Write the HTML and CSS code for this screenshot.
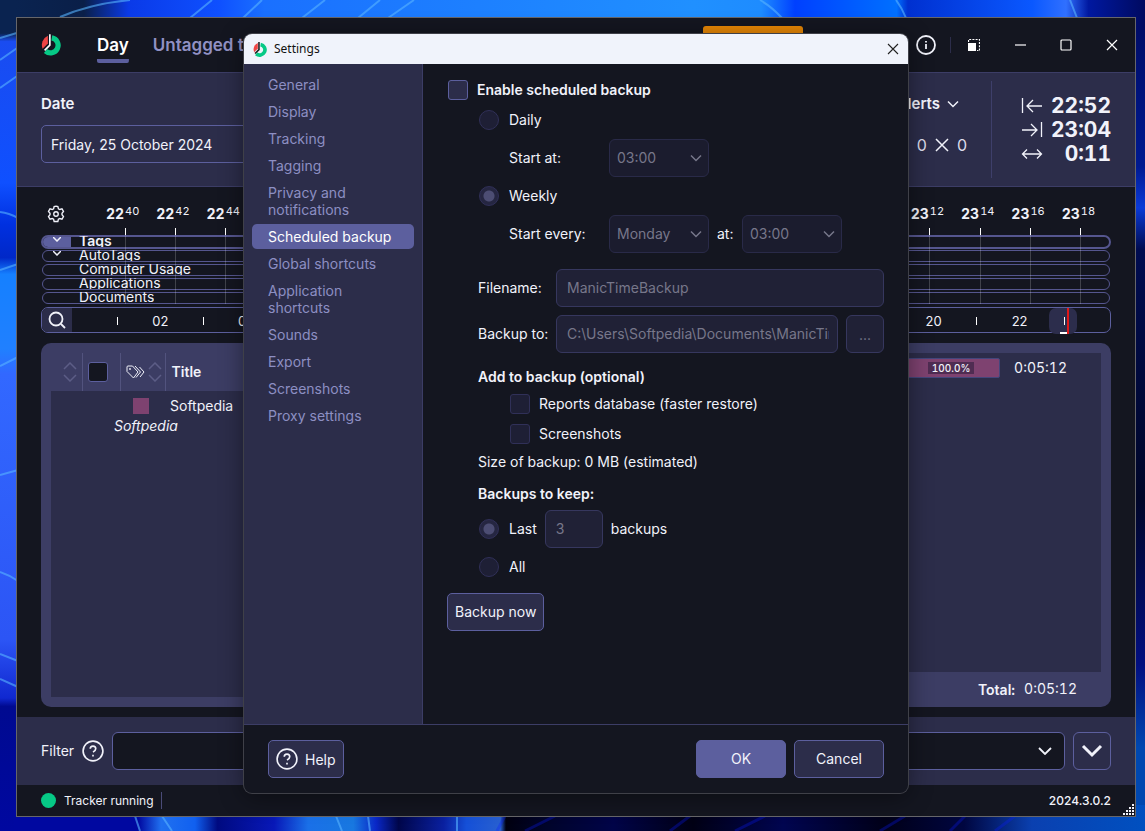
FILE: index.html
```html
<!DOCTYPE html>
<html lang="en">
<head>
<meta charset="utf-8">
<title>ManicTime</title>
<link rel="stylesheet" href="styles.css">
</head>
<body>
<div class="desktop">
<svg class="wallpaper" viewBox="0 0 1145 831" preserveAspectRatio="none" aria-hidden="true">
  <defs>
    <linearGradient id="wl" x1="0" y1="0" x2="0" y2="1">
      <stop offset="0" stop-color="#0a2350"/><stop offset=".04" stop-color="#0a2350"/><stop offset=".05" stop-color="#1a4cf0"/>
      <stop offset=".22" stop-color="#0f50ff"/><stop offset=".27" stop-color="#0030e0"/><stop offset=".31" stop-color="#0028c8"/>
      <stop offset=".33" stop-color="#1580ff"/><stop offset=".42" stop-color="#2080ff"/><stop offset=".45" stop-color="#3268ff"/>
      <stop offset=".77" stop-color="#2c55f5"/><stop offset=".84" stop-color="#1028d0"/><stop offset=".85" stop-color="#000a90"/>
      <stop offset="1" stop-color="#0008a0"/>
    </linearGradient>
    <linearGradient id="wt" x1="0" y1="0" x2="1" y2="0">
      <stop offset="0" stop-color="#0a2350"/><stop offset=".06" stop-color="#0a1f48"/><stop offset=".1" stop-color="#0a3ae8"/>
      <stop offset=".18" stop-color="#0f50ff"/><stop offset=".22" stop-color="#1a70ff"/><stop offset=".6" stop-color="#2090ff"/>
      <stop offset=".66" stop-color="#1e8cff"/><stop offset=".69" stop-color="#0040ff"/><stop offset=".78" stop-color="#0070ff"/>
      <stop offset=".79" stop-color="#0030d0"/><stop offset=".9" stop-color="#0a58ff"/><stop offset=".93" stop-color="#3070ff"/>
      <stop offset=".95" stop-color="#0018a0"/><stop offset="1" stop-color="#000a60"/>
    </linearGradient>
    <linearGradient id="wr" x1="0" y1="0" x2="0" y2="1">
      <stop offset="0" stop-color="#000a60"/><stop offset=".2" stop-color="#001a90"/><stop offset=".25" stop-color="#0a3ad8"/>
      <stop offset=".3" stop-color="#000c50"/><stop offset=".6" stop-color="#000628"/><stop offset=".8" stop-color="#020f80"/>
      <stop offset=".9" stop-color="#0048b0"/><stop offset="1" stop-color="#0048b0"/>
    </linearGradient>
    <linearGradient id="wb" x1="0" y1="0" x2="1" y2="0">
      <stop offset="0" stop-color="#0008a0"/><stop offset=".11" stop-color="#0008a0"/><stop offset=".13" stop-color="#2070f0"/>
      <stop offset=".16" stop-color="#1060f0"/><stop offset=".18" stop-color="#000a80"/><stop offset=".23" stop-color="#0818b8"/>
      <stop offset=".26" stop-color="#1a70e8"/><stop offset=".3" stop-color="#1878e0"/><stop offset=".32" stop-color="#0a28c8"/>
      <stop offset=".34" stop-color="#00064a"/><stop offset=".38" stop-color="#0a20a0"/><stop offset=".4" stop-color="#1550d8"/>
      <stop offset=".43" stop-color="#2860d0"/><stop offset=".435" stop-color="#000010"/><stop offset=".47" stop-color="#00042a"/>
      <stop offset=".53" stop-color="#000448"/><stop offset=".6" stop-color="#000014"/><stop offset=".68" stop-color="#000550"/>
      <stop offset=".77" stop-color="#000018"/><stop offset=".84" stop-color="#000640"/><stop offset=".9" stop-color="#0a40b0"/>
      <stop offset="1" stop-color="#0050c0"/>
    </linearGradient>
  </defs>
  <rect width="1145" height="831" fill="#000a60"/>
  <rect width="40" height="831" fill="url(#wl)"/>
  <rect x="1120" width="25" height="831" fill="url(#wr)"/>
  <rect x="16" width="1129" height="30" fill="url(#wt)"/>
  <rect x="14" y="805" width="1131" height="26" fill="url(#wb)"/>
  <g fill="none" stroke="#58b4ff" stroke-width="2" opacity=".6">
    <path d="M0 38L20 32M0 60L20 46M0 88L20 74M0 212Q9 213 18 218M0 270L18 264M0 366L18 357M0 475L18 470M0 572Q9 575 18 581M0 654L18 661M0 679L18 687"/>
    <path d="M60 17Q90 4 130 0M190 18L212 0M243 18L262 0M302 18L325 0M358 18L380 0M388 18L414 0M760 0Q772 7 782 18M896 0Q902 8 906 18M1070 0L1077 18"/>
    <path d="M135 816L140 831M162 816L172 831M336 816L342 831M368 816L370 831M457 816V831"/>
  </g>
  <g stroke="#0a1cff" stroke-width="3" opacity=".3">
    <path d="M505 816L497 831M555 816L525 831M690 816L670 831M765 816L735 831M905 816L880 831M965 816L950 831M1015 816L995 831"/>
  </g>
</svg>

<main class="window">
  <header class="topbar">
    <svg class="logo" viewBox="0 0 61 65" aria-hidden="true"><path d="M33 11A23 23 0 1 1 14 51" fill="none" stroke="#06c986" stroke-width="16"/><path d="M21 4V28L5 44A31 31 0 0 1 21 4Z" fill="#ef4545"/><path d="M27 0V33L11 49" fill="none" stroke="#fff" stroke-width="5"/></svg>
    <nav class="tabs">
      <a class="tab tab-active" href="#day">Day</a>
      <a class="tab" href="#untagged">Untagged time</a>
    </nav>
    <button class="promo" type="button" aria-label="Upgrade"></button>
    <button class="info" type="button" aria-label="Info"><svg viewBox="0 0 20 20"><circle cx="10" cy="10" r="9" /><path d="M10 9V14M10 6V7.500"/></svg></button>
    <div class="caption">
      <button type="button" aria-label="Compact view"><svg viewBox="0 0 12 12"><path d="M0 4H8V12H0Z" fill="#fff" stroke="none"/><path d="M.5 3V.5H11.500V11.500H9" stroke-dasharray="2 1.200"/></svg></button>
      <button type="button" aria-label="Minimize"><svg viewBox="0 0 12 12"><path d="M1 6H12"/></svg></button>
      <button type="button" aria-label="Maximize"><svg viewBox="0 0 12 12"><rect x="1" y="1" width="10" height="10" rx="1"/></svg></button>
      <button type="button" aria-label="Close"><svg viewBox="0 0 12 12"><path d="M1 1L11 11M11 1L1 11"/></svg></button>
    </div>
  </header>

  <section class="dayband">
    <div class="datebox">
      <label for="date">Date</label>
      <input id="date" type="text" value="Friday, 25 October 2024">
    </div>
    <div class="alerts">
      <button type="button" class="alerts-head">Alerts <svg viewBox="0 0 12 8"><path d="M1 1.500L6 6.500L11 1.500"/></svg></button>
      <div class="alerts-row">
        <svg viewBox="0 0 14 14"><path d="M1 8L5 12L13 2"/></svg><span>0</span>
        <svg viewBox="0 0 14 14"><path d="M1 1L13 13M13 1L1 13"/></svg><span>0</span>
      </div>
    </div>
    <div class="stats">
      <svg viewBox="0 0 22 16"><path d="M1.500 0V15M21 8H6M12 2L6 8L12 14"/></svg><b>22:52</b>
      <svg viewBox="0 0 22 16"><path d="M20.500 0V15M1 8H16M10 2L16 8L10 14"/></svg><b>23:04</b>
      <svg viewBox="0 0 22 16"><path d="M1.500 8H20.500M6 3.500L1.500 8L6 12.500M16 3.500L20.500 8L16 12.500"/></svg><b>0:11</b>
    </div>
  </section>

  <section class="timeline">
    <div class="tracks">
      <div class="rulerrow">
        <button class="gear" type="button" aria-label="Timeline settings"><svg viewBox="0 0 24 24"><circle cx="12" cy="12" r="3"/><path d="M12 1.500L14.500 2L15.200 5L17 6L20 5.200L22 8.500L20 11V13L22 15.500L20 18.800L17 18L15.200 19L14.500 22H9.500L8.800 19L7 18L4 18.800L2 15.500L4 13V11L2 8.500L4 5.200L7 6L8.800 5L9.500 2Z"/></svg></button>
      </div>
      <div class="track track-main"><span class="track-toggle"><svg viewBox="0 0 8 5"><path d="M0 0L4 4L8 0"/></svg></span><span class="track-name">Tags</span></div>
      <div class="track"><span class="track-toggle"><svg viewBox="0 0 8 5"><path d="M0 0L4 4L8 0"/></svg></span><span class="track-name">AutoTags</span></div>
      <div class="track"><span class="track-toggle"></span><span class="track-name">Computer Usage</span></div>
      <div class="track"><span class="track-toggle"></span><span class="track-name">Applications</span></div>
      <div class="track"><span class="track-toggle"></span><span class="track-name">Documents</span></div>
      <div class="ruler">
        <div class="tick"><b>22</b><small>40</small></div><div class="tick"><b>22</b><small>42</small></div><div class="tick"><b>22</b><small>44</small></div>
        <div class="tick"></div><div class="tick"></div><div class="tick"></div><div class="tick"></div><div class="tick"></div><div class="tick"></div><div class="tick"></div><div class="tick"></div><div class="tick"></div><div class="tick"></div><div class="tick"></div><div class="tick"></div><div class="tick"></div>
        <div class="tick"><b>23</b><small>12</small></div><div class="tick"><b>23</b><small>14</small></div><div class="tick"><b>23</b><small>16</small></div><div class="tick"><b>23</b><small>18</small></div>
      </div>
    </div>
    <div class="overview">
      <button class="search" type="button" aria-label="Search"><svg viewBox="0 0 18 18"><circle cx="8" cy="8" r="6.500"/><path d="M13 13L17 17"/></svg></button>
      <div class="hours">
        <i></i><span>02</span><i></i><span>04</span><i></i><span></span><i></i><span></span><i></i><span></span><i></i><span></span><i></i><span></span><i></i><span></span><i></i><span></span><i></i><span>20</span><i></i><span>22</span><i class="now"></i>
      </div>
    </div>
  </section>

  <section class="panel">
    <div class="details">
      <table class="list">
        <colgroup><col class="c1"><col class="c2"><col class="c3"><col></colgroup>
        <thead><tr>
          <th><svg class="sort" viewBox="0 0 14 20"><path d="M1 7L7 1L13 7M1 13L7 19L13 13"/></svg></th>
          <th><input type="checkbox" aria-label="Select all"></th>
          <th><svg class="tagicon" viewBox="0 0 19 14"><path d="M1 2Q1 1 2 1H6.500L12 7L7.500 13L1 6.500ZM9 1L14.500 7L10 12.500M13.500 2L18 7L14 12"/><circle cx="4" cy="4" r=".6"/></svg><svg class="sort" viewBox="0 0 14 20"><path d="M1 7L7 1L13 7M1 13L7 19L13 13"/></svg></th>
          <th class="title">Title</th>
        </tr></thead>
        <tbody>
          <tr><td></td><td></td><td class="swatchcell"><span class="swatch"></span></td><td class="name">Softpedia</td></tr>
          <tr><td colspan="4" class="group">Softpedia</td></tr>
          <tr><td colspan="4"></td></tr>
        </tbody>
      </table>
    </div>
    <div class="summary">
      <div class="chart"><div class="bar"><span>100.0%</span></div><span class="dur">0:05:12</span></div>
      <div class="total"><b>Total:</b><span class="dur">0:05:12</span></div>
    </div>
  </section>

  <section class="filter">
    <label for="filter">Filter</label>
    <svg class="help" viewBox="0 0 20 20" aria-hidden="true"><circle cx="10" cy="10" r="9"/><path d="M7.500 8Q7.500 5.500 10 5.500T12.500 8Q12.500 9.500 10 11M10 13.500V15"/></svg>
    <div class="combo"><input id="filter" type="text"><svg viewBox="0 0 14 8"><path d="M1 1L7 7L13 1"/></svg></div>
    <button class="expand" type="button" aria-label="Expand"><svg viewBox="0 0 22 14"><path d="M2 2L11 11L20 2"/></svg></button>
  </section>

  <footer class="status">
    <span class="dot"></span><span class="state">Tracker running</span><span class="version">2024.3.0.2</span>
    <svg class="grip" viewBox="0 0 12 12" aria-hidden="true"><path d="M9 1H11M6 4H8M9 4H11M3 7H5M6 7H8M9 7H11M0 10H2M3 10H5M6 10H8M9 10H11"/></svg>
  </footer>
</main>

<div class="dialog" role="dialog" aria-label="Settings">
  <header class="dialog-title">
    <svg class="minilogo" viewBox="0 0 61 65" aria-hidden="true"><path d="M33 11A23 23 0 1 1 14 51" fill="none" stroke="#06c986" stroke-width="16"/><path d="M21 4V28L5 44A31 31 0 0 1 21 4Z" fill="#ef4545"/><path d="M26 0V33L9 50" fill="none" stroke="#222" stroke-width="7"/></svg>
    <span>Settings</span>
    <button type="button" aria-label="Close settings"><svg viewBox="0 0 12 12"><path d="M1 1L11 11M11 1L1 11"/></svg></button>
  </header>
  <div class="dialog-body">
    <nav class="side">
      <a href="#general">General</a>
      <a href="#display">Display</a>
      <a href="#tracking">Tracking</a>
      <a href="#tagging">Tagging</a>
      <a href="#privacy">Privacy and notifications</a>
      <a href="#backup" class="current">Scheduled backup</a>
      <a href="#global">Global shortcuts</a>
      <a href="#app">Application shortcuts</a>
      <a href="#sounds">Sounds</a>
      <a href="#export">Export</a>
      <a href="#shots">Screenshots</a>
      <a href="#proxy">Proxy settings</a>
    </nav>
    <form class="form">
      <div class="row"><input type="checkbox" id="enable" class="live"><label for="enable" class="strong">Enable scheduled backup</label></div>
      <div class="row in1"><input type="radio" name="freq" id="daily" disabled><label for="daily">Daily</label></div>
      <div class="row in2 first"><label class="wide" for="dtime">Start at:</label><span class="pick"><select id="dtime" disabled><option>03:00</option></select><svg viewBox="0 0 12 8"><path d="M1 1.500L6 6.500L11 1.500"/></svg></span></div>
      <div class="row in1 tall"><input type="radio" name="freq" id="weekly" checked disabled><label for="weekly">Weekly</label></div>
      <div class="row in2"><label class="wide" for="wday">Start every:</label><span class="pick"><select id="wday" disabled><option>Monday</option></select><svg viewBox="0 0 12 8"><path d="M1 1.500L6 6.500L11 1.500"/></svg></span><label class="at" for="wtime">at:</label><span class="pick"><select id="wtime" disabled><option>03:00</option></select><svg viewBox="0 0 12 8"><path d="M1 1.500L6 6.500L11 1.500"/></svg></span></div>
      <div class="row field"><label for="fname">Filename:</label><input type="text" id="fname" value="ManicTimeBackup" disabled></div>
      <div class="row field next"><label for="fpath">Backup to:</label><input type="text" id="fpath" value="C:\Users\Softpedia\Documents\ManicTime\Backup" disabled><button type="button" class="browse" disabled>...</button></div>
      <h3>Add to backup (optional)</h3>
      <div class="row in2"><input type="checkbox" id="reports" disabled><label for="reports">Reports database (faster restore)</label></div>
      <div class="row in2"><input type="checkbox" id="screens" disabled><label for="screens">Screenshots</label></div>
      <p>Size of backup: 0 MB (estimated)</p>
      <h3 class="keep">Backups to keep:</h3>
      <div class="row in1 tall"><input type="radio" name="keep" id="last" checked disabled><label for="last">Last</label><input type="text" class="count" value="3" aria-label="Number of backups" disabled><label for="last">backups</label></div>
      <div class="row in1 tall"><input type="radio" name="keep" id="all" disabled><label for="all">All</label></div>
      <button type="button" class="btn backup">Backup now</button>
    </form>
  </div>
  <footer class="dialog-foot">
    <button type="button" class="btn helpbtn"><svg class="help" viewBox="0 0 20 20"><circle cx="10" cy="10" r="9"/><path d="M7.500 8Q7.500 5.500 10 5.500T12.500 8Q12.500 9.500 10 11M10 13.500V15"/></svg>Help</button>
    <button type="button" class="btn primary">OK</button>
    <button type="button" class="btn cancel">Cancel</button>
  </footer>
</div>
</div>
</body>
</html>
```
FILE: styles.css
```css
* { box-sizing: border-box; }
body { margin: 0; font: 14px/17px Inter, "Liberation Sans", sans-serif; color: #f1f2fa; }
button, input, select { font: inherit; color: inherit; margin: 0; padding: 0; }
button { background: none; border: 0; display: inline-flex; align-items: center; justify-content: center; }
a { color: inherit; text-decoration: none; }
svg { display: block; flex: none; fill: none; stroke: #f1f2fa; stroke-width: 1.5; }
.wallpaper { position: absolute; inset: 0; width: 100%; height: 100%; stroke: none; z-index: -1; }
.desktop { position: relative; min-height: 100vh; padding: 17px 9px 14px 16px; display: flex; overflow: hidden; }

.window { flex: 1; min-width: 0; display: flex; flex-direction: column; background: #141620; border: 1px solid #66666a; }
.topbar { height: 55px; display: flex; align-items: center; padding-left: 24px; border-bottom: 1px solid #3c3d66; }
.logo { width: 20px; height: 22px; stroke: none; }
.tabs { display: flex; gap: 24px; margin-left: 36px; flex: 1; }
.tab { font-size: 17px; line-height: 22px; font-weight: 600; color: #9191c4; padding: 6px 0 3px; border-bottom: 4px solid transparent; white-space: nowrap; }
.tab-active { color: #fff; background: linear-gradient(#5c5f9e, #5c5f9e) bottom / 100% 4px no-repeat; background-origin: border-box; border-radius: 2px; }
.promo { width: 100px; height: 38px; background: #e78705; border-radius: 3px; margin-right: 113px; }
.info { width: 20px; height: 20px; margin-right: 14px; }
.info svg { width: 20px; height: 20px; stroke-width: 1.8; }
.caption { display: flex; border-left: 1px solid #2c2d4a; }
.caption button { width: 46px; height: 16px; }
.caption svg { width: 12px; height: 12px; stroke-width: 1.2; stroke: #fff; }

.dayband { height: 114px; display: flex; justify-content: space-between; background: #2c2d4a; border-bottom: 1px solid #3c3d66; padding: 8px 24px; }
.datebox { display: flex; flex-direction: column; padding-top: 13px; gap: 11px; }
.datebox label { font-size: 15px; line-height: 20px; font-weight: 600; }
.datebox input { width: 320px; height: 38px; padding: 0 9px; background: transparent; border: 1px solid #5c5f9e; border-radius: 5px; outline: 0; }
.alerts { margin-left: auto; padding: 13px 24px 0 0; display: flex; flex-direction: column; align-items: flex-end; gap: 21px; }
.alerts-head { font-size: 15px; line-height: 20px; font-weight: 600; gap: 7px; margin-right: 8px; }
.alerts-head svg { width: 12px; height: 8px; }
.alerts-row { display: flex; align-items: center; gap: 8px; font-size: 16px; line-height: 20px; color: #dcdcea; }
.alerts-row svg { width: 14px; height: 14px; }
.stats { border-left: 1px solid #3e3f6a; padding: 13px 0 0 29px; display: grid; grid-template-columns: 22px auto; grid-auto-rows: 24px; column-gap: 8px; align-items: center; align-content: start; font-size: 21px; line-height: 24px; font-variant-numeric: tabular-nums; }
.stats b { text-align: right; }
.stats svg { width: 22px; height: 16px; stroke-width: 1.3; }

.timeline { padding: 0 24px; }
.tracks { position: relative; }
.rulerrow { height: 48px; padding: 18px 0 0 6px; }
.gear svg { width: 18px; height: 18px; stroke-width: 1.8; }
.track { height: 12px; margin: 0 1px 2px; border: 1px solid #55568f; border-radius: 7px; display: flex; }
.track-main { height: 14px; margin: 0 0 1px; border-width: 2px; }
.track-name { height: 11px; margin-top: -1px; line-height: 10px; padding-left: 8px; overflow: hidden; }
.track-main .track-name { font-weight: 600; }
.track-toggle { width: 28px; height: 10px; flex: none; padding-left: 10px; border-radius: 5px 0 0 5px; }
.track-main .track-toggle { background: #5c5f9e; }
.track-toggle svg { width: 8px; height: 5px; }
.ruler { position: absolute; inset: 0 5px 0 59px; display: grid; grid-template-columns: repeat(20, 1fr); pointer-events: none; }
.tick { display: flex; justify-content: center; padding: 17px 5px 0 0; gap: 1px; line-height: 20px; font-variant-numeric: tabular-nums; background: linear-gradient(#fff, #fff) 50% 41px / 1px 7px no-repeat, linear-gradient(transparent 48px, #ffffff30 48px) 50% 0 / 1px 100% no-repeat; }
.tick small { font-size: 11px; line-height: 14px; }
.overview { height: 26px; margin-top: 3px; display: flex; border: 1px solid #5c5f9e; border-radius: 7px; }
.search { width: 30px; background: #2c2d4a; border-radius: 6px 0 0 6px; }
.search svg { width: 18px; height: 18px; stroke-width: 1.8; }
.hours { flex: 1; margin: 0 26px 0 24px; display: grid; grid-template-columns: repeat(23, 1fr); align-items: center; justify-items: center; font-size: 13px; }
.hours i { width: 1px; height: 8px; background: #fff; }
.hours .now { width: 28px; height: 26px; border-radius: 7px; background: linear-gradient(#e01818, #e01818) 18px 0 / 2px 100% no-repeat, linear-gradient(#fff, #fff) 11px 100% / 7px 2px no-repeat, linear-gradient(#fff, #fff) 15px 9px / 1px 8px no-repeat, #2c2d4c; }

.panel { flex: 1; margin: 10px 24px; padding: 10px 10px 0; background: #3c3d64; border-radius: 10px; display: flex; }
.details { flex: 1; padding-bottom: 10px; display: flex; }
.list { width: 100%; border-collapse: collapse; table-layout: fixed; background: #2c2d4a; text-align: left; }
.c1 { width: 31px; }
.c2 { width: 38px; }
.c3 { width: 45px; }
.list th { height: 38px; padding: 0 0 1px; background: #3c3d64; border-right: 1px solid #52537e; }
.list th:last-child { border: 0; }
.list th svg { display: inline-block; vertical-align: middle; }
.list th:first-child { padding-left: 12px; }
.list th:nth-child(2) { padding-left: 5px; }
.list th:nth-child(3) { padding-left: 5px; }
.list .title { padding-left: 6px; font-weight: 600; }
.sort { width: 14px; height: 20px; stroke: #5c5d86; }
.tagicon { width: 19px; height: 14px; stroke-width: 1; margin-right: 3px; }
.list td { padding: 0; height: 1px; }
.list .name { padding: 4px 0 0 5px; height: 25px; }
.list .swatchcell { padding: 5px 0 0 13px; }
.swatch { display: block; width: 16px; height: 16px; background: #7e4270; }
.list .group { padding-left: 63px; height: 18px; font-style: italic; }
.list tbody tr:last-child td { height: auto; }
.summary { flex: 1; display: flex; flex-direction: column; font-variant-numeric: tabular-nums; }
.dur { line-height: 20px; }
.chart { flex: 1; background: #2c2d4a; padding: 5px 34px 0 0; display: flex; justify-content: flex-end; align-items: flex-start; gap: 14px; }
.bar { width: 98px; height: 20px; background: #7e4270; border: 1px solid #44467c; border-radius: 2px; display: flex; align-items: center; justify-content: center; }
.bar span { background: #4f2c52; font-size: 10px; line-height: 12px; font-weight: 500; padding: 0 4px; }
.total { height: 35px; display: flex; align-items: center; justify-content: flex-end; gap: 9px; padding: 0 24px 1px 0; }
.total b { font-weight: 600; }

.filter { height: 68px; padding: 0 24px; display: flex; align-items: center; background: #2c2d4a; gap: 8px; }
.filter label { padding-bottom: 1px; }
.help { width: 22px; height: 22px; }
.combo { flex: 1; display: flex; align-items: center; height: 38px; background: #141620; border: 1px solid #5c5f9e; border-radius: 6px; padding-right: 12px; }
.combo input { flex: 1; height: 30px; background: none; border: 0; outline: 0; padding: 0 10px; }
.combo svg { width: 14px; height: 8px; stroke-width: 1.8; }
.expand { width: 38px; height: 38px; border: 1px solid #5c5f9e; border-radius: 6px; }
.expand svg { width: 22px; height: 14px; stroke-width: 3; }
.status { height: 31px; padding: 0 0 0 24px; display: flex; align-items: center; font-size: 12px; }
.dot { width: 15px; height: 15px; border-radius: 50%; background: #06c986; }
.state { margin-left: 8px; padding-right: 7px; border-right: 1px solid #4a4b78; }
.version { margin-left: auto; font-weight: 500; }
.grip { width: 12px; height: 12px; margin: 0 0 0 12px; align-self: flex-end; stroke-width: 2; }

.dialog { position: absolute; inset: 34px 237px 38px 244px; display: flex; flex-direction: column; background: #141620; border-radius: 8px; overflow: hidden; box-shadow: 0 0 0 1px #3f4048, 0 4px 24px #00000070; }
.dialog-title { height: 30px; display: flex; align-items: center; background: #f0f3fb; color: #111; font: 12px/16px "Noto Sans", sans-serif; padding-left: 9px; gap: 7px; }
.minilogo { width: 14px; height: 15px; stroke: none; }
.dialog-title button { margin-left: auto; width: 30px; height: 30px; }
.dialog-title button svg { width: 12px; height: 12px; stroke: #222; stroke-width: 1.1; }
.dialog-body { flex: 1; display: flex; min-height: 0; }
.side { width: 179px; padding: 8px 8px 0; background: #2c2d4a; border-right: 1px solid #3c3d66; display: flex; flex-direction: column; gap: 2px; color: #8d8fc3; }
.side a { padding: 4px 16px; border-radius: 5px; }
.side .current { background: #5c5f9e; color: #fff; }
.form { flex: 1; min-width: 0; padding: 11px 24px 0; display: flex; flex-direction: column; }
.row { min-height: 30px; display: flex; align-items: center; padding-left: 1px; }
.row label { padding-bottom: 2px; }
.row.in1 { padding-left: 32px; }
.row.in2 { padding-left: 63px; }
.tall { min-height: 38px; }
.row.first { margin-top: 4px; }
.row.field { margin-top: 16px; padding-left: 31px; }
.row.next { margin-top: 8px; }
.strong { font-weight: 600; }
.row .wide { width: 100px; margin-left: -1px; }
.row .at { padding: 0 8px 2px; width: 33px; }
.field label { width: 78px; }
input[type=checkbox], input[type=radio] { appearance: none; width: 20px; height: 20px; flex: none; border: 1px solid #303058; background: #1e1f35; border-radius: 3px; margin-right: 9px; }
.form input[type=radio] { border-radius: 50%; margin-right: 10px; }
.form input[type=radio]:checked { background: radial-gradient(circle, #4c4d73 5px, #252641 6px); }
.form input.live { background: #2c2d4a; border-color: #5c5f9e; }
.list input[type=checkbox] { display: block; background: #141620; border-color: #5c5f9e; margin: 0; }
.form input[type=text], .form select, .browse { height: 38px; border: 1px solid #36375e; border-radius: 6px; background: #202136; color: #77778a; opacity: 1; }
.form input[type=text] { flex: 1; min-width: 0; padding: 0 8px 2px 10px; }
.form input[type=text].count { flex: none; width: 58px; margin: 0 8px; }
.pick { display: flex; align-items: center; }
.form select { appearance: none; width: 100px; padding: 0 7px 2px; background: #1b1c2e; border-color: #292a48; }
.pick svg { width: 12px; height: 8px; margin-left: -19px; margin-right: 7px; stroke: #77778a; pointer-events: none; }
.browse { width: 38px; margin-left: 8px; }
h3, .form p { margin: 12px 0 0 31px; font-size: 14px; line-height: 24px; font-weight: 600; }
.form p { margin-top: 1px; font-weight: 400; }
.form .keep { margin: 8px 0 4px 31px; }
.btn { height: 38px; border: 1px solid #5c5f9e; border-radius: 5px; background: #2c2d4a; padding-bottom: 1px; }
.backup { align-self: flex-start; padding: 0 7px 2px; margin-top: 7px; }
.dialog-foot { border-top: 1px solid #3c3d66; padding: 15px 24px; display: flex; gap: 8px; }
.helpbtn { gap: 7px; padding: 0 7px; margin-right: auto; }
.primary, .cancel { width: 90px; }
.primary { background: #5c5f9e; }
```
